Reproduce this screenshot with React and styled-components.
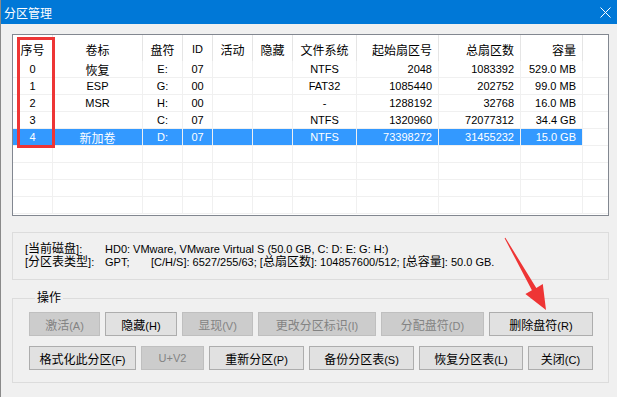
import React from 'react';
import styled, { createGlobalStyle } from 'styled-components';

const GlobalStyle = createGlobalStyle`
  html, body {
    margin: 0;
    padding: 0;
    background: #f0f0f0;
  }
  body {
    font-family: "Liberation Sans", "Noto Sans CJK SC", sans-serif;
    font-size: 11px;
    color: #000;
  }
`;

const COLS = '40px 90px 40px 30px 40px 40px 64px 82px 82px 62px 1fr';

const Window = styled.div`
  position: relative;
  width: 617px;
  height: 397px;
  box-sizing: border-box;
  border-left: 1px solid #8a8a8a;
  background: #f0f0f0;
  display: flex;
  flex-direction: column;
  overflow: hidden;
`;

const TitleBar = styled.div`
  flex: none;
  height: 24px;
  background: #0078d7;
  color: #fff;
  display: flex;
  align-items: center;
  justify-content: space-between;
  padding: 0 6px 0 3px;
  font-size: 12px;
`;

const Content = styled.div`
  display: flex;
  flex-direction: column;
  padding: 10px 8px 0 11px;
`;

const Frame = styled.div`
  position: relative;
  height: 182px;
  box-sizing: border-box;
  border: 1px solid #828790;
  background: #fff;
  overflow: hidden;
`;

const Row = styled.div`
  display: grid;
  grid-template-columns: ${COLS};
  height: ${({ $head }) => ($head ? 26 : 17)}px;
  box-sizing: border-box;
  border-bottom: ${({ $head }) => ($head ? 'none' : '1px solid #f0f0f0')};
`;

const Cell = styled.div`
  display: flex;
  align-items: center;
  justify-content: ${({ $align }) =>
    $align === 'right' ? 'flex-end' : $align === 'left' ? 'flex-start' : 'center'};
  padding: ${({ $head }) => ($head ? '2px 6px 0' : '0 6px')};
  white-space: nowrap;
  overflow: hidden;
  border-right: 1px solid ${({ $head }) => ($head ? '#e5e5e5' : '#f0f0f0')};
  background: ${({ $sel }) => ($sel ? '#3399ff' : 'transparent')};
  color: ${({ $sel }) => ($sel ? '#fff' : '#000')};

  &:last-child {
    border-right: none;
    background: transparent;
  }
`;

const Han = styled.span`
  font-size: 12px;
`;

const Marker = styled.div`
  position: absolute;
  left: 4px;
  top: 2px;
  width: 38px;
  height: 111px;
  box-sizing: border-box;
  border: 3px solid #ee3535;
  pointer-events: none;
`;

const InfoBox = styled.div`
  margin-top: 16px;
  height: 48px;
  box-sizing: border-box;
  border: 1px solid #dcdcdc;
  padding: 10px 12px 0;
  display: grid;
  grid-template-columns: 80px 46px auto;
  grid-auto-rows: 13px;
  line-height: 13px;
  white-space: nowrap;
`;

const Wide = styled.span`
  grid-column: span 2;
`;

const Group = styled.fieldset`
  margin: 11px 0 0;
  min-width: 0;
  border: 1px solid #dcdcdc;
  padding: 7px 15px 12px 16px;
  display: flex;
  flex-direction: column;
  gap: 10px;

  legend {
    margin-left: 6px;
    padding: 0 2px;
    line-height: 14px;
  }
`;

const ButtonRow = styled.div`
  display: flex;
  gap: 5px;
`;

const Button = styled.button`
  flex: none;
  width: ${({ $w }) => $w}px;
  height: 24px;
  box-sizing: border-box;
  padding: 0;
  font-family: inherit;
  font-size: 11px;
  border: 1px solid ${({ disabled }) => (disabled ? '#bfbfbf' : '#adadad')};
  background: ${({ disabled }) => (disabled ? '#cccccc' : '#e1e1e1')};
  color: ${({ disabled }) => (disabled ? '#838383' : '#000')};
`;

const Arrow = styled.svg`
  position: absolute;
  left: 494px;
  top: 232px;
  pointer-events: none;
`;

const Mixed = ({ text }) =>
  text.split(/([\u4e00-\u9fff]+)/).map((s, i) => (i % 2 ? <Han key={i}>{s}</Han> : s));

const columns = [
  { title: '序号', align: 'center' },
  { title: '卷标', align: 'center' },
  { title: '盘符', align: 'center' },
  { title: 'ID', align: 'center' },
  { title: '活动', align: 'center' },
  { title: '隐藏', align: 'center' },
  { title: '文件系统', align: 'center' },
  { title: '起始扇区号', align: 'right' },
  { title: '总扇区数', align: 'right' },
  { title: '容量', align: 'right' },
  { title: '', align: 'center' },
];

const partitions = [
  ['0', '恢复', 'E:', '07', '', '', 'NTFS', '2048', '1083392', '529.0 MB'],
  ['1', 'ESP', 'G:', '00', '', '', 'FAT32', '1085440', '202752', '99.0 MB'],
  ['2', 'MSR', 'H:', '00', '', '', '-', '1288192', '32768', '16.0 MB'],
  ['3', '', 'C:', '07', '', '', 'NTFS', '1320960', '72077312', '34.4 GB'],
  ['4', '新加卷', 'D:', '07', '', '', 'NTFS', '73398272', '31455232', '15.0 GB'],
];
const SELECTED = 4;
const BLANK_ROWS = 4;

const row1 = [
  { label: '激活(A)', w: 71, off: true },
  { label: '隐藏(H)', w: 72 },
  { label: '显现(V)', w: 71, off: true },
  { label: '更改分区标识(I)', w: 118, off: true },
  { label: '分配盘符(D)', w: 103, off: true },
  { label: '删除盘符(R)', w: 104 },
];

const row2 = [
  { label: '格式化此分区(F)', w: 107 },
  { label: 'U+V2', w: 63, off: true },
  { label: '重新分区(P)', w: 95 },
  { label: '备份分区表(S)', w: 105 },
  { label: '恢复分区表(L)', w: 104 },
  { label: '关闭(C)', w: 65 },
];

export default function App() {
  return (
    <>
      <GlobalStyle />
      <Window>
        <TitleBar>
          <span>分区管理</span>
          <svg width="11" height="11" viewBox="0 0 11 11">
            <path d="M0.5 0.5L10.5 10.5M10.5 0.5L0.5 10.5" stroke="#fff" strokeWidth="1" />
          </svg>
        </TitleBar>

        <Content>
          <Frame>
            <Row $head>
              {columns.map((c, i) => (
                <Cell key={i} $head $align={c.align}>
                  <Mixed text={c.title} />
                </Cell>
              ))}
            </Row>
            {partitions.map((p, r) => (
              <Row key={r}>
                {[...p, ''].map((v, i) => (
                  <Cell key={i} $align={columns[i].align} $sel={r === SELECTED}>
                    <Mixed text={v} />
                  </Cell>
                ))}
              </Row>
            ))}
            {Array.from({ length: BLANK_ROWS }).map((_, r) => (
              <Row key={'b' + r}>
                {columns.map((c, i) => (
                  <Cell key={i} />
                ))}
              </Row>
            ))}
            <Marker />
          </Frame>

          <InfoBox>
            <span><Mixed text="[当前磁盘]:" /></span>
            <Wide>HD0: VMware, VMware Virtual S (50.0 GB, C: D: E: G: H:)</Wide>
            <span><Mixed text="[分区表类型]:" /></span>
            <span>GPT;</span>
            <span>
              <Mixed text="[C/H/S]: 6527/255/63; [总扇区数]: 104857600/512; [总容量]: 50.0 GB." />
            </span>
          </InfoBox>

          <Group>
            <legend><Mixed text="操作" /></legend>
            <ButtonRow>
              {row1.map((b) => (
                <Button key={b.label} $w={b.w} disabled={b.off}>
                  <Mixed text={b.label} />
                </Button>
              ))}
            </ButtonRow>
            <ButtonRow>
              {row2.map((b) => (
                <Button key={b.label} $w={b.w} disabled={b.off}>
                  <Mixed text={b.label} />
                </Button>
              ))}
            </ButtonRow>
          </Group>
        </Content>

        <Arrow width="64" height="84" viewBox="0 0 64 84">
          <polygon
            points="10.4,5.8 41.3,55.9 47.8,52.1 51,78 30.4,62.1 36.9,58.3 9.6,6.2"
            fill="#ee3535"
          />
        </Arrow>
      </Window>
    </>
  );
}
